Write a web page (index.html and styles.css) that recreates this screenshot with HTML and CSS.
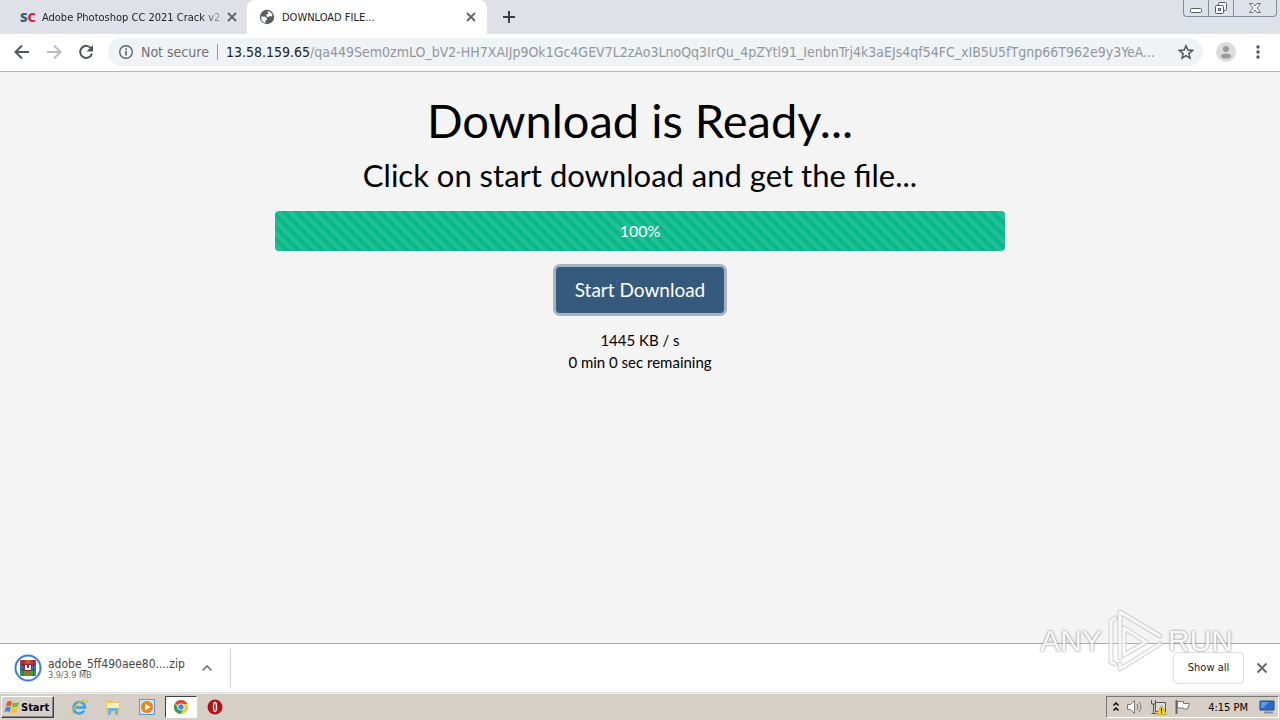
FILE: index.html
```html
<!DOCTYPE html>
<html lang="en">
<head>
<meta charset="utf-8">
<title>DOWNLOAD FILE...</title>
<link rel="stylesheet" href="styles.css">
</head>
<body>
<div class="screen">
  <header class="tabstrip">
    <div class="tab">
      <span class="favicon-sc"><b>S</b><b class="c">C</b></span>
      <span class="tab-title fade">Adobe Photoshop CC 2021 Crack v2</span>
      <button class="icon-btn" aria-label="Close tab"><svg width="10" height="10" viewBox="0 0 10 10"><path d="M1 1l8 8M9 1L1 9" stroke="#5f6368" stroke-width="1.8"/></svg></button>
    </div>
    <div class="tab active">
      <svg width="16" height="16" viewBox="0 0 16 16"><circle cx="8" cy="8" r="7.2" fill="#5a5e63"/><path d="M2.200 7.600l4.200.2 1.600 1.700-.2 1.600-1.400.4v2.700C3.800 13.500 1.900 11 2.200 7.600zM8.500 2.300c2.300.2 4.200 1.600 5 3.700l-1 1.400-2.300-.3-.7 1.200-2.200-1 .2-1.700 1.800-.8z" fill="#fff"/></svg>
      <span class="tab-title">DOWNLOAD FILE...</span>
      <button class="icon-btn" aria-label="Close tab"><svg width="10" height="10" viewBox="0 0 10 10"><path d="M1 1l8 8M9 1L1 9" stroke="#5f6368" stroke-width="1.8"/></svg></button>
    </div>
    <button class="icon-btn new-tab" aria-label="New tab"><svg width="12" height="12" viewBox="0 0 12 12"><path d="M6 0v12M0 6h12" stroke="#3c4043" stroke-width="2"/></svg></button>
    <div class="window-controls">
      <button aria-label="Minimize"><svg width="14" height="14" viewBox="0 0 14 14"><rect x="1.500" y="7.500" width="11" height="4" rx="1" fill="#fff" stroke="#555b66"/></svg></button>
      <button aria-label="Restore"><svg width="14" height="14" viewBox="0 0 14 14"><rect x="4.500" y="1.500" width="8" height="8" rx="1" fill="#fff" stroke="#555b66"/><rect x="1.500" y="4.500" width="8" height="8" rx="1" fill="#fff" stroke="#555b66"/><rect x="4.500" y="7.500" width="2" height="2" fill="#fff" stroke="#555b66"/></svg></button>
      <button class="wide" aria-label="Close"><svg width="14" height="14" viewBox="0 0 14 14"><path d="M1.500 2.500h3.500l2 2.500 2-2.500h3.500L9 7l3.500 4.500H9L7 9l-2 2.500H1.500L5 7z" fill="#fff" stroke="#6b717b"/></svg></button>
    </div>
  </header>

  <nav class="toolbar">
    <button class="icon-btn" aria-label="Back"><svg width="16" height="16" viewBox="0 0 16 16"><path d="M15 8H2M8 1.500L1.500 8 8 14.500" fill="none" stroke="#50555a" stroke-width="2"/></svg></button>
    <button class="icon-btn" aria-label="Forward"><svg width="16" height="16" viewBox="0 0 16 16"><path d="M1 8h13M8 1.500L14.500 8 8 14.500" fill="none" stroke="#b9bbbe" stroke-width="2"/></svg></button>
    <button class="icon-btn" aria-label="Reload"><svg width="16" height="16" viewBox="0 0 16 16"><path d="M13.200 4.500A6 6 0 1 0 14 9.500" fill="none" stroke="#50555a" stroke-width="2"/><path d="M15 1v6.500H8.500z" fill="#50555a"/></svg></button>
    <div class="omnibox">
      <svg width="16" height="16" viewBox="0 0 16 16"><circle cx="8" cy="8" r="6.300" fill="none" stroke="#5f6368" stroke-width="1.400"/><path d="M8 7v4.500M8 4.300v1.600" stroke="#5f6368" stroke-width="1.600"/></svg>
      <span class="security">Not secure</span>
      <span class="url"><span class="host">13.58.159.65</span>/qa449Sem0zmLO_bV2-HH7XAIJp9Ok1Gc4GEV7L2zAo3LnoQq3IrQu_4pZYtl91_IenbnTrj4k3aEJs4qf54FC_xIB5U5fTgnp66T962e9y3YeA...</span>
      <button class="icon-btn" aria-label="Bookmark"><svg width="16" height="16" viewBox="0 0 16 16"><path d="M8 1.800l1.800 4.300 4.700.4-3.600 3.100 1.100 4.600L8 11.700l-4 2.500 1.100-4.600L1.500 6.500l4.700-.4z" fill="none" stroke="#50555a" stroke-width="1.500"/></svg></button>
    </div>
    <button class="icon-btn" aria-label="Profile"><svg width="20" height="20" viewBox="0 0 20 20"><circle cx="10" cy="10" r="10" fill="#dcdcdc"/><circle cx="10" cy="7" r="3" fill="#9b9b9b"/><ellipse cx="10" cy="14" rx="5" ry="2.600" fill="#9b9b9b"/></svg></button>
    <button class="icon-btn menu" aria-label="Menu"><svg width="4" height="14" viewBox="0 0 4 14"><g fill="#50555a"><circle cx="2" cy="2" r="1.700"/><circle cx="2" cy="7" r="1.700"/><circle cx="2" cy="12" r="1.700"/></g></svg></button>
  </nav>

  <main class="page">
    <h1>Download is Ready...</h1>
    <h2>Click on start download and get the file...</h2>
    <div class="progress" role="progressbar" aria-label="Download progress" aria-valuenow="100">100%</div>
    <button class="start-download">Start Download</button>
    <p>1445 KB / s</p>
    <p>0 min 0 sec remaining</p>
  </main>

  <footer class="shelf">
    <div class="download">
      <svg width="28" height="28" viewBox="0 0 28 28"><circle cx="14" cy="14" r="12.500" fill="#fff" stroke="#3b78e7" stroke-width="2"/><path d="M6 6h16v5H6z" fill="#c42f4a"/><path d="M6 11h16v5H6z" fill="#3b6fd0"/><path d="M6 16h16v6H6z" fill="#37a148"/><path d="M12 6h4v16h-4z" fill="#b8602a"/><path d="M10.500 10.500h7v6h-7z" fill="#eee" stroke="#8d2e30"/><path d="M13 11h2v3h-2z" fill="#8d2e30"/><path d="M6 11h4M18 11h4M6 16h4M18 16h4M9 6v16M19.500 6v16" stroke="#333" stroke-width=".6"/></svg>
      <div class="file"><span class="name">adobe_5ff490aee80....zip</span><span class="size">3.9/3.9 MB</span></div>
      <button class="icon-btn" aria-label="File options"><svg width="12" height="8" viewBox="0 0 12 8"><path d="M1.500 6.500L6 2l4.500 4.500" fill="none" stroke="#777" stroke-width="1.700"/></svg></button>
    </div>
    <button class="show-all">Show all</button>
    <button class="icon-btn" aria-label="Close downloads"><svg width="12" height="12" viewBox="0 0 12 12"><path d="M1.500 1.500l9 9M10.500 1.500l-9 9" stroke="#6a6a6a" stroke-width="2"/></svg></button>
    <div class="watermark"><span>ANY</span><svg width="58" height="66" viewBox="0 0 58 66"><g fill="none" stroke-linejoin="round" stroke-linecap="round"><path d="M9 10l-4 3v41l4 2M14 50V4l40 24M54 36L14 61v-5M18 20v27l22-13z" stroke="#c4c4c4" stroke-width="5"/><path d="M9 10l-4 3v41l4 2M14 50V4l40 24M54 36L14 61v-5M18 20v27l22-13z" stroke="#fafafa" stroke-width="3"/></g></svg><span>RUN</span></div>
  </footer>

  <div class="taskbar">
    <button class="start"><svg width="16" height="16" viewBox="0 0 16 16"><path d="M3 3c2-1.500 3.500-1 5 0L7 7.500c-2-1-3.500-1-5 0z" fill="#e8572b"/><path d="M9 3.500c2 .8 4 .8 6-.5l-1 4.500c-2 1-4 1-6 .4z" fill="#7db739"/><path d="M1.700 8.500c2-1 3.500-.8 5 0l-1 4.500c-1.800-1-3.300-1-5.200 0z" fill="#3d88d8"/><path d="M7.700 9c2 .8 4 .8 6-.4l-1 4.600c-2 1-4 1-6 .2z" fill="#f5c22c"/></svg>Start</button>
    <button class="launch" aria-label="Internet Explorer"><svg width="18" height="18" viewBox="0 0 18 18"><path d="M14.300 12.500A5.800 5.800 0 1 1 15 9.500H5" fill="none" stroke="#3ca4df" stroke-width="2.500"/><path d="M3 16.500C-1 13 11 1 16 2c1.200.4.800 2-.2 3.500" fill="none" stroke="#e5bd3f" stroke-width="1.300"/></svg></button>
    <button class="launch" aria-label="Explorer"><svg width="18" height="18" viewBox="0 0 18 18"><path d="M2 2h5l1 2h8v11H2z" fill="#e7c766"/><path d="M3 5h12v5H3z" fill="#f9eeb4"/><path d="M4 17v-6q0-1 1-1h8q1 0 1 1v6h-3v-4H7v4z" fill="#69b5e5"/></svg></button>
    <button class="launch" aria-label="Media player"><svg width="18" height="18" viewBox="0 0 18 18"><rect x="1.500" y="1.500" width="15" height="15" fill="#cfe2f4" stroke="#639bd1"/><circle cx="9" cy="9" r="6" fill="#f08218"/><path d="M7 5.500v7L12.500 9z" fill="#fff"/></svg></button>
    <button class="launch pressed" aria-label="Chrome"><svg width="16" height="16" viewBox="0 0 16 16"><circle cx="8" cy="8" r="7" fill="#f6c927"/><path d="M8 8L2 4.300A7 7 0 0 1 14.300 5H8z" fill="#dd4b3e"/><path d="M2 4.300A7 7 0 0 0 7.500 15L11 9.500 5 9.500z" fill="#2d9d57"/><circle cx="8" cy="8" r="3.500" fill="#fff"/><circle cx="8" cy="8" r="2.700" fill="#4584ed"/></svg></button>
    <button class="launch" aria-label="Opera"><svg width="18" height="18" viewBox="0 0 18 18"><circle cx="9" cy="9" r="7.500" fill="#b31217"/><ellipse cx="9" cy="9" rx="2.200" ry="5.200" fill="#fff"/><ellipse cx="9" cy="9" rx=".8" ry="4" fill="#b31217"/></svg></button>
    <div class="tray">
      <svg width="8" height="12" viewBox="0 0 8 12"><path d="M1.500 4.500L4 2l2.500 2.500M1.500 9.500L4 7l2.500 2.500" fill="none" stroke="#000" stroke-width="1.500"/></svg>
      <svg width="18" height="16" viewBox="0 0 18 16"><path d="M1.500 5.500h3l4-4v13l-4-4h-3z" fill="#fff" stroke="#777"/><path d="M11 5q2 3 0 6M13 3q4 5 0 10" fill="none" stroke="#777"/></svg>
      <svg width="18" height="16" viewBox="0 0 18 16"><path d="M5.500 3.500h10v9h-10z" fill="#ddd" stroke="#555"/><path d="M1.500 1v4h4V1M3.500 5v9M1.500 14.500h5" fill="none" stroke="#555"/><path d="M11.500 6l5 9.500h-10z" fill="#f5d81e" stroke="#a58c00" stroke-width=".5"/><path d="M11.500 9v3.500M11.500 13.300v1" stroke="#000"/></svg>
      <svg width="18" height="16" viewBox="0 0 18 16"><path d="M2.500 1v14" stroke="#666" stroke-width="2"/><path d="M3.500 2.500h6v2h6l-2 5.500h-4V9h-6z" fill="#fff" stroke="#777"/></svg>
      <span class="clock">4:15 PM</span>
      <svg width="16" height="14" viewBox="0 0 16 14"><path d="M1 1h14v9H1z" fill="#2a6bc5" stroke="#234a81"/><path d="M2 2h8L4 8H2z" fill="#5d9ce0"/><path d="M5 12.500h9" stroke="#7f91a7" stroke-width="2"/></svg>
    </div>
  </div>
</div>
</body>
</html>
```

FILE: styles.css
```css
* { box-sizing: border-box; }
body { margin: 0; font-family: "DejaVu Sans Condensed", "DejaVu Sans", sans-serif; color: #222; }
button { font: inherit; color: inherit; border: 0; padding: 0; background: none; }
svg { display: block; flex: none; }
.screen { min-height: 100vh; display: flex; flex-direction: column; background: #f4f4f4; }
.icon-btn { display: flex; flex: none; align-items: center; justify-content: center; }

.tabstrip { display: flex; height: 34px; background: #dee1e8; font-size: 11px; }
.tab { display: flex; align-items: center; width: 240px; padding: 0 11px 0 12px; gap: 7px; }
.tab:first-child { width: 247px; padding: 0 10px 0 20px; gap: 6px; }
.tab.active { background: #fff; border-radius: 8px 8px 0 0; }
.tab-title { flex: 1; min-width: 0; overflow: hidden; white-space: nowrap; }
.fade { mask-image: linear-gradient(90deg, #000 88%, rgba(0, 0, 0, .3)); }
.favicon-sc { color: #326575; font: 700 13px "Open Sans", sans-serif; }
.favicon-sc .c { color: #df2935; }
.new-tab { width: 44px; }
.window-controls { display: flex; height: 17px; margin: 0 3px 0 auto; border: 1px solid #858b98; border-top: 0; border-radius: 0 0 4px 4px; }
.window-controls button { display: flex; align-items: center; justify-content: center; width: 25px; border-right: 1px solid #858b98; }
.window-controls .wide { width: 42px; border: 0; }

.toolbar { display: flex; align-items: center; height: 38px; gap: 16px; padding: 0 20px 1px 14px; background: #fff; border-bottom: 1px solid #b8b8b8; font-size: 14px; }
.omnibox { display: flex; flex: 1; min-width: 0; align-items: center; height: 28px; padding: 0 9px 0 10px; border-radius: 14px; background: #f0f3f5; margin-left: -2px; margin-right: -3px; }
.security { margin: 0 8px 0 7px; color: #707070; white-space: nowrap; }
.url { flex: 1; min-width: 0; border-left: 1px solid #999; padding-left: 8px; overflow: hidden; white-space: nowrap; color: #92979a; line-height: 16px; }
.host { color: #222; }
.menu { margin-left: 4px; }

.page { display: flex; flex: 1; flex-direction: column; align-items: center; padding: 19px 20px; font-family: Lato, sans-serif; color: #000; }
h1, h2, p { margin: 0; font-weight: 400; text-align: center; }
h1 { font-size: 47px; line-height: 58px; margin-bottom: 6px; }
h2 { font-size: 31px; line-height: 40px; margin-bottom: 16px; }
.progress { width: 100%; max-width: 730px; height: 40px; margin-bottom: 16px; border-radius: 4px; background: #08b888 linear-gradient(45deg, rgba(255, 255, 255, .1) 25%, transparent 25%, transparent 50%, rgba(255, 255, 255, .1) 50%, rgba(255, 255, 255, .1) 75%, transparent 75%) 0 0 / 12px 12px; line-height: 40px; text-align: center; color: #fff; font-size: 16px; }
.start-download { padding: 0 19px 2px; height: 46px; margin-bottom: 16px; border-radius: 4px; background: #365a7d; box-shadow: 0 0 0 3px #a6b3c3; color: #fff; font-size: 19px; }
.page p { font-size: 15px; line-height: 22px; }

.shelf { position: relative; display: flex; align-items: center; height: 50px; padding: 0 12px 0 14px; background: #fff; border-top: 1px solid #aaa; border-bottom: 1px solid #ddd; }
.download { display: flex; align-items: center; width: 217px; height: 38px; border-right: 1px solid #ccc; margin-right: auto; }
.file { display: flex; flex-direction: column; width: 140px; margin: 0 13px 0 6px; white-space: nowrap; color: #444; }
.name { font-size: 12px; line-height: 14px; }
.size { font-size: 9px; line-height: 9px; color: #666; }
.show-all { width: 71px; height: 32px; margin-right: 12px; padding-bottom: 2px; border: 1px solid #ddd; border-radius: 4px; font-size: 11px; }
.watermark { position: absolute; right: 47px; bottom: 18px; display: flex; align-items: center; gap: 4px; color: #fafafa; font: 30px/22px "Liberation Sans", sans-serif; text-shadow: 0 0 2px #888, 0 0 3px #999; opacity: .8; pointer-events: none; }

.taskbar { display: flex; align-items: center; height: 27px; padding: 2px 1px; background: #d5cfc7; border-top: 1px solid #eee; font-size: 11px; color: #000; }
.start { display: flex; align-items: center; gap: 1px; width: 53px; height: 22px; padding-left: 2px; margin-right: 9px; border: 1px solid; border-color: #fff #404040 #404040 #fff; box-shadow: inset -1px -1px #888; font-weight: 700; }
.launch { display: flex; align-items: center; justify-content: center; width: 32px; height: 22px; margin-right: 2px; }
.pressed { background: #fff; border: 1px solid; border-color: #404040 #fff #fff #404040; }
.tray { display: flex; align-items: center; height: 22px; gap: 6px; margin-left: auto; padding: 0 3px 0 5px; border: 1px solid; border-color: #777 #fff #fff #777; }
.clock { margin: 0 5px 0 10px; }
```
